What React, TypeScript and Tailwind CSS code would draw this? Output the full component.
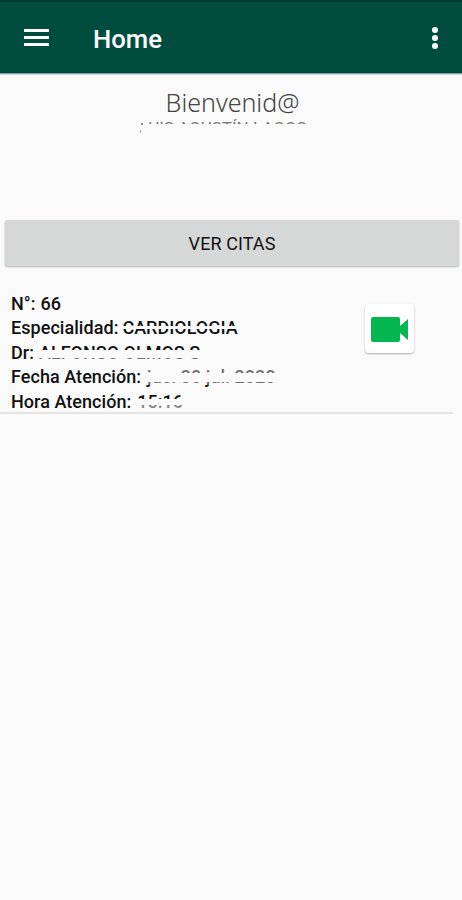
import React from "react";

type Cita = { label: string; value: string; masks: string[]; gap: string };

const citas: Cita[] = [
  { label: "N°:", value: "66", masks: [], gap: "ml-[5px]" },
  {
    label: "Especialidad:",
    value: "CARDIOLOGIA",
    masks: ["top-[10px] h-[3px]"],
    gap: "ml-[4px]",
  },
  {
    label: "Dr:",
    value: "ALFONSO OLMOS S",
    masks: ["top-[9px] h-[8px]", "top-[17px] h-[5px] opacity-40"],
    gap: "ml-[5px]",
  },
  {
    label: "Fecha Atención:",
    value: "jue. 30 jul. 2020",
    masks: ["top-[8px] h-[9px]", "top-0 h-[8px] opacity-40", "top-[17px] h-[3px] opacity-40"],
    gap: "ml-[6px] tracking-[0.02px]",
  },
  {
    label: "Hora Atención:",
    value: "15:16",
    masks: ["top-[9px] h-[6px]", "top-[15px] h-[6px] opacity-50"],
    gap: "ml-[6px]",
  },
];

function Header() {
  return (
    <header className="flex h-[74px] items-center border-t-2 border-b border-t-[#003a2f] border-b-[#7d9d95] bg-[#004d40] text-white shadow-[0_1px_1px_rgba(0,0,0,0.12)]">
      <button className="ml-6 flex w-[25px] flex-col gap-[4px]" aria-label="Menu">
        <span className="h-[3px] w-full bg-white"></span>
        <span className="h-[3px] w-full bg-white"></span>
        <span className="h-[3px] w-full bg-white"></span>
      </button>
      <h1 className="mt-[3px] ml-11 text-[25.7px] font-medium">Home</h1>
      <button className="mr-6 ml-auto flex flex-col gap-[2px]" aria-label="Opciones">
        <span className="size-[6px] rounded-full bg-white"></span>
        <span className="size-[6px] rounded-full bg-white"></span>
        <span className="size-[6px] rounded-full bg-white"></span>
      </button>
    </header>
  );
}

export default function App() {
  return (
    <div className="min-h-[900px] bg-[#fafafa] font-['Roboto',sans-serif] text-[#111]">
      <Header />

      <section className="flex h-[146px] flex-col items-center pt-[12px] text-[#444]">
        <h2 className="ml-[3px] font-['Noto_Sans',sans-serif] text-[25px] leading-8 font-light">
          Bienvenid@
        </h2>
        {/* Only the top edge of the name is shown */}
        <div className="relative -ml-[16px] h-5">
          <p className="text-[17px] leading-5 whitespace-nowrap text-[#777]">
            LUIS AGUSTÍN LAGOS
          </p>
          <span className="absolute top-[6px] -right-px -left-px h-[14px] bg-[#fafafa]"></span>
          <span className="absolute top-0 -left-px h-[6px] w-[10px] bg-[#fafafa]"></span>
          <span className="absolute top-[5px] left-[2px] h-[2px] w-[2px] bg-[#888]"></span>
          <span className="absolute top-[12px] left-px h-[3px] w-px rotate-12 bg-[#aaa]"></span>
        </div>
      </section>

      <button className="ml-[5px] flex h-[46px] w-[454px] items-center justify-center rounded-[2px] bg-[#d6d7d7] text-[18px] tracking-[0.08px] shadow-[0_1px_2px_rgba(0,0,0,0.3)]">
        VER CITAS
      </button>

      <section className="mr-[9px] flex h-[148px] justify-between border-b-2 border-[#e5e5e5] pt-[26px] pl-[11px]">
        <div>
          {citas.map((cita) => (
            <p
              key={cita.label}
              className="flex h-[24.4px] text-[18px] leading-[24.4px] font-medium whitespace-nowrap"
            >
              <span className="tracking-[0.05px]">{cita.label}</span>
              <span className={`relative ${cita.gap}`}>
                {cita.value}
                {cita.masks.map((mask) => (
                  <span
                    key={mask}
                    className={`absolute -inset-x-px bg-[#fafafa] ${mask}`}
                  ></span>
                ))}
              </span>
            </p>
          ))}
        </div>
        <button
          className="mt-3 mr-[39px] flex size-[49px] items-center justify-center rounded-[4px] bg-white pt-px shadow-[0_1px_2px_rgba(0,0,0,0.3)]"
          aria-label="Videollamada"
        >
          <svg viewBox="0 0 37 25" className="h-[25px] w-[37px]" fill="#04b64f">
            <path d="M2 0h25q2 0 2 2v7l8-7v21l-8-7v7q0 2-2 2H2q-2 0-2-2V2q0-2 2-2z" />
          </svg>
        </button>
      </section>
    </div>
  );
}
